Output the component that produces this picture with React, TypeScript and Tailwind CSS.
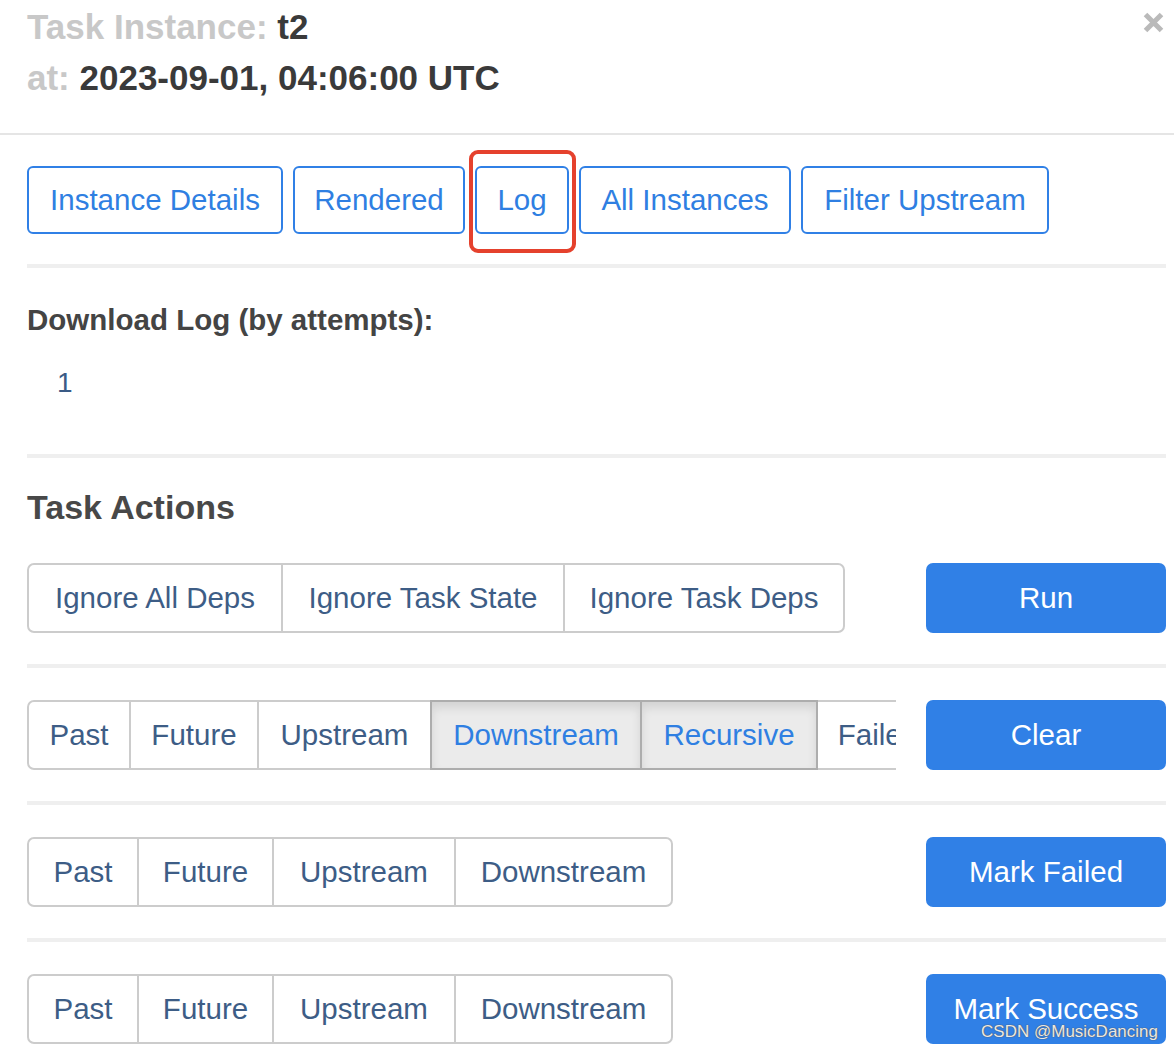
import React from "react";

type Btn = { label: string; w: string; active?: boolean };

const row1: Btn[] = [
  { label: "Ignore All Deps", w: "w-[256px]" },
  { label: "Ignore Task State", w: "w-[284px]" },
  { label: "Ignore Task Deps", w: "w-[282px]" },
];

const row2: Btn[] = [
  { label: "Past", w: "w-[104px]" },
  { label: "Future", w: "w-[130px]" },
  { label: "Upstream", w: "w-[175px]" },
  { label: "Downstream", w: "w-[212px]", active: true },
  { label: "Recursive", w: "w-[178px]", active: true },
  { label: "Failed", w: "w-[124px]" },
];

const row3: Btn[] = [
  { label: "Past", w: "w-[112px]" },
  { label: "Future", w: "w-[137px]" },
  { label: "Upstream", w: "w-[184px]" },
  { label: "Downstream", w: "w-[219px]" },
];

function Group({ items, clipped }: { items: Btn[]; clipped?: boolean }) {
  return (
    <div className="w-[869px] overflow-hidden">
      <div className="flex">
        {items.map((b, i) => (
          <div
            key={b.label}
            className={[
              b.w,
              "h-[70px] shrink-0 flex items-center justify-center border-2 whitespace-nowrap",
              i > 0 ? "-ml-[2px]" : "rounded-l-[7px]",
              i === items.length - 1 && !clipped ? "rounded-r-[7px]" : "",
              b.active
                ? "relative z-10 border-[#adadad] bg-[#ebebeb] text-[#2f7fe2] shadow-[inset_0_6px_10px_rgba(0,0,0,0.1)]"
                : "border-[#cccccc] bg-white text-[#3d5d86]",
            ].join(" ")}
          >
            {b.label}
          </div>
        ))}
      </div>
    </div>
  );
}

function ActionRow({ items, action, clipped }: { items: Btn[]; action: string; clipped?: boolean }) {
  return (
    <div className="flex items-start">
      <Group items={items} clipped={clipped} />
      <div className="ml-auto w-[240px] h-[70px] rounded-[7px] bg-[#3080e6] text-white flex items-center justify-center">
        {action}
      </div>
    </div>
  );
}

function Rule({ top, bottom }: { top: string; bottom: string }) {
  return <div className={`${top} ${bottom} h-[4px] bg-[#efefef]`} />;
}

const navBtns = [
  { label: "Instance Details", w: "w-[256px]" },
  { label: "Rendered", w: "w-[172px]" },
  { label: "Log", w: "w-[94px]", marked: true },
  { label: "All Instances", w: "w-[212px]" },
  { label: "Filter Upstream", w: "w-[248px]" },
];

export default function App() {
  return (
    <div className="relative w-[1174px] h-[1052px] overflow-hidden bg-white font-['Liberation_Sans',Arial,sans-serif] text-[29.5px]">
      {/* header */}
      <div className="flex h-[135px] border-b-2 border-[#e5e5e5]">
        <div className="pl-[27px] pt-[1px] text-[35px] leading-[51px] font-bold">
          <div>
            <span className="text-[#c8c8c8]">Task Instance: </span>
            <span className="text-[#3a3a3a]">t2</span>
          </div>
          <div>
            <span className="text-[#c8c8c8]">at: </span>
            <span className="text-[#3a3a3a]">2023-09-01, 04:06:00 UTC</span>
          </div>
        </div>
        <svg className="ml-auto mt-[12px] mr-[10px]" width="21" height="21" viewBox="0 0 21 21">
          <path d="M2.5 2.5 L18.5 18.5 M18.5 2.5 L2.5 18.5" stroke="#bababa" strokeWidth="5" />
        </svg>
      </div>

      <div className="pl-[27px] pr-[8px] pt-[31px]">
        {/* nav buttons */}
        <div className="flex gap-[10px]">
          {navBtns.map((b) => (
            <div key={b.label} className="relative">
              <div
                className={`${b.w} h-[68px] flex items-center justify-center border-2 border-[#3080e6] rounded-[6px] text-[#2f7fe2] whitespace-nowrap`}
              >
                {b.label}
              </div>
              {b.marked && (
                <div className="absolute -left-[6px] -right-[7px] -top-[16px] -bottom-[19px] border-[4px] border-[#e5412d] rounded-[9px]" />
              )}
            </div>
          ))}
        </div>

        <Rule top="mt-[30px]" bottom="mb-[32px]" />

        <div className="font-bold leading-[40px] text-[#444]">Download Log (by attempts):</div>
        <div className="mt-[23px] pl-[30px] text-[28px] leading-[40px] text-[#3a5b86]">1</div>

        <Rule top="mt-[51px]" bottom="mb-[27px]" />

        <div className="text-[34px] font-bold leading-[44px] text-[#484848]">Task Actions</div>

        <div className="mt-[34px]">
          <ActionRow items={row1} action="Run" />
        </div>
        <Rule top="mt-[31px]" bottom="mb-[32px]" />
        <ActionRow items={row2} action="Clear" clipped />
        <Rule top="mt-[31px]" bottom="mb-[32px]" />
        <ActionRow items={row3} action="Mark Failed" />
        <Rule top="mt-[31px]" bottom="mb-[32px]" />
        <ActionRow items={row3} action="Mark Success" />
      </div>

      <div className="absolute right-[16px] top-[1021px] text-[17px] leading-[22px] text-[#e8e8e8] [text-shadow:0_0_1px_#555,0_0_1px_#555]">
        CSDN @MusicDancing
      </div>
    </div>
  );
}
